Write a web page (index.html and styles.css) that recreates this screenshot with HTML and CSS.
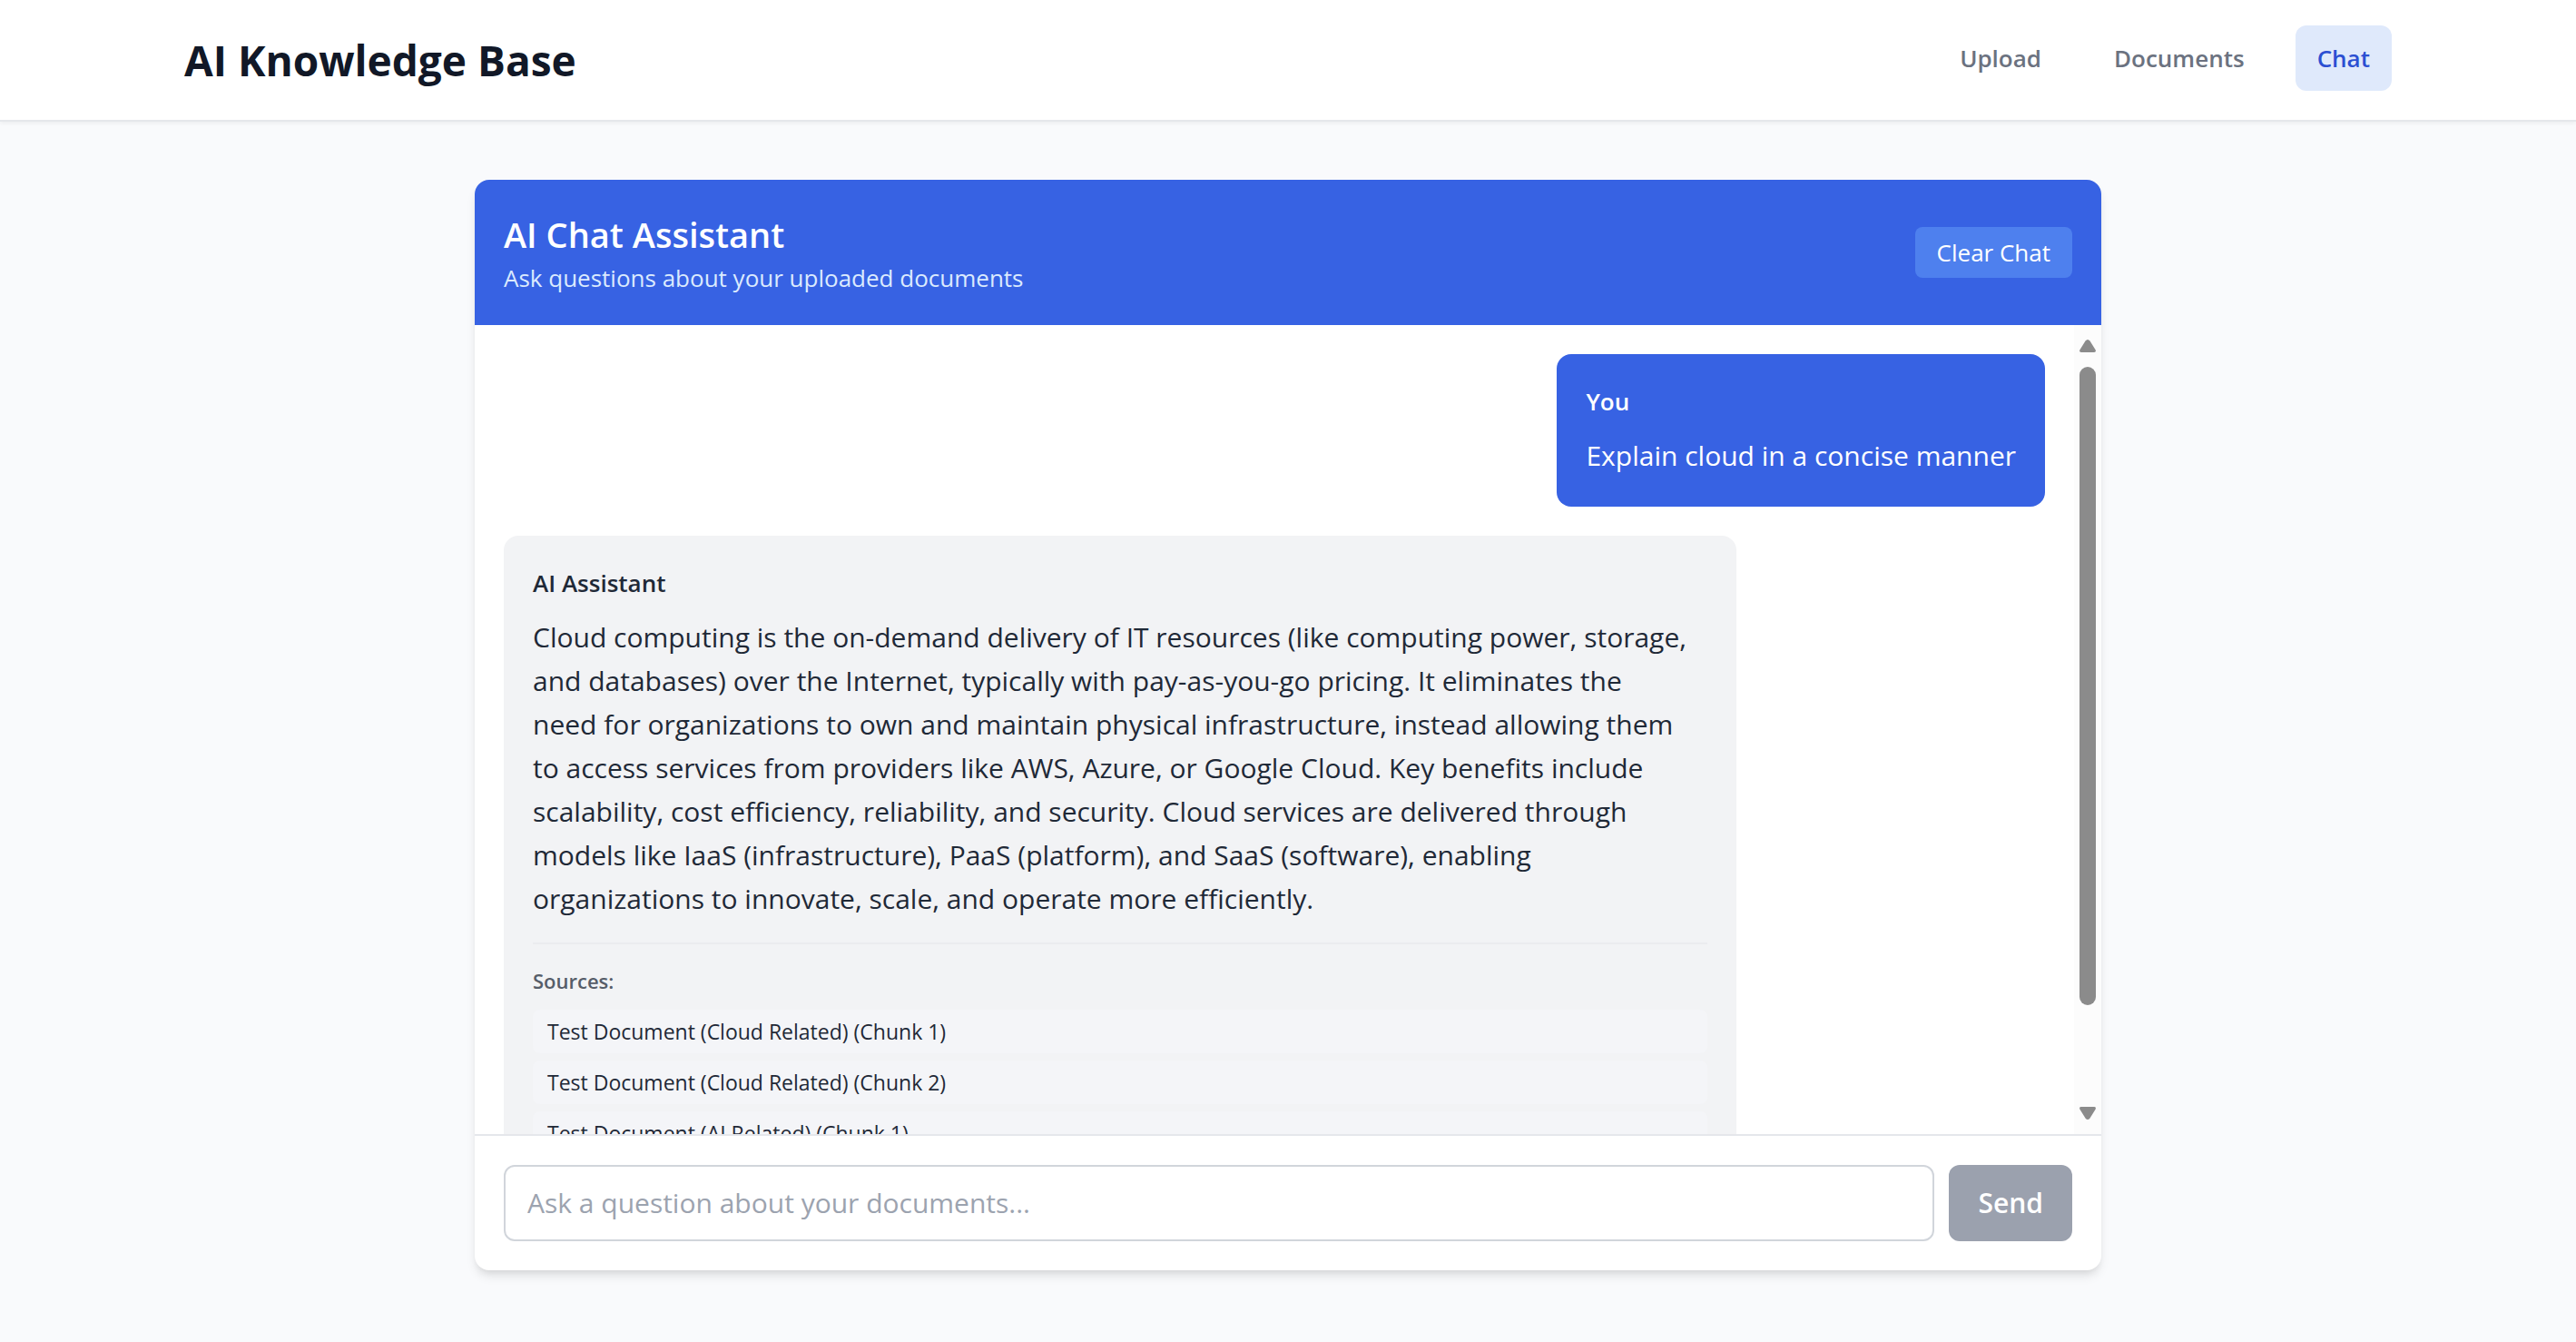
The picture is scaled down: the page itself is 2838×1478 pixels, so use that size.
FILE: index.html
```html
<!DOCTYPE html>
<html lang="en">
<head>
  <meta charset="utf-8">
  <meta name="viewport" content="width=device-width, initial-scale=1">
  <title>AI Knowledge Base</title>
  <link rel="stylesheet" href="styles.css">
</head>
<body>
  <header class="site-header">
    <div class="site-header-inner">
      <h1 class="site-title">AI Knowledge Base</h1>
      <nav class="site-nav">
        <a class="nav-link" href="#upload">Upload</a>
        <a class="nav-link" href="#documents">Documents</a>
        <a class="nav-link nav-link-active" href="#chat" aria-current="page">Chat</a>
      </nav>
    </div>
  </header>

  <main class="page">
    <section class="chat-card">
      <div class="chat-header">
        <div>
          <h2 class="chat-title">AI Chat Assistant</h2>
          <p class="chat-subtitle">Ask questions about your uploaded documents</p>
        </div>
        <button class="clear-button" type="button">Clear Chat</button>
      </div>

      <div class="chat-body">
        <div class="messages">
          <article class="message message-user">
            <h3 class="message-author">You</h3>
            <p class="message-text">Explain cloud in a concise manner</p>
          </article>
          <article class="message message-assistant">
            <h3 class="message-author">AI Assistant</h3>
            <p class="message-text">Cloud computing is the on-demand delivery of IT resources (like computing power, storage,<br>
              and databases) over the Internet, typically with pay-as-you-go pricing. It eliminates the<br>
              need for organizations to own and maintain physical infrastructure, instead allowing them<br>
              to access services from providers like AWS, Azure, or Google Cloud. Key benefits include<br>
              scalability, cost efficiency, reliability, and security. Cloud services are delivered through<br>
              models like IaaS (infrastructure), PaaS (platform), and SaaS (software), enabling<br>
              organizations to innovate, scale, and operate more efficiently.</p>
            <div class="sources">
              <h4 class="sources-title">Sources:</h4>
              <ul class="sources-list">
                <li class="source">Test Document (Cloud Related) (Chunk 1)</li>
                <li class="source">Test Document (Cloud Related) (Chunk 2)</li>
                <li class="source">Test Document (AI Related) (Chunk 1)</li>
              </ul>
            </div>
          </article>
        </div>
        <div class="scrollbar" aria-hidden="true">
          <svg class="scrollbar-arrow" viewBox="0 0 18 14"><path d="M6.500 1.500Q9-1.500 11.500 1.500L17.600 11.200Q18.600 14 16.200 14H1.800Q-.6 14 .4 11.200Z"/></svg>
          <div class="scrollbar-track"><div class="scrollbar-thumb"></div></div>
          <svg class="scrollbar-arrow" viewBox="0 0 18 14"><path d="M6.500 12.500Q9 15.500 11.500 12.500L17.600 2.800Q18.600 0 16.200 0H1.800Q-.6 0 .4 2.800Z"/></svg>
        </div>
      </div>

      <form class="composer">
        <input class="composer-input" type="text" aria-label="Question" placeholder="Ask a question about your documents...">
        <button class="send-button" type="submit" disabled>Send</button>
      </form>
    </section>
  </main>
</body>
</html>
```
FILE: styles.css
```css
:root {
  --blue: #3762e3;
  --blue-light: #4e80ee;
  --ink: #1f2937;
  --line: #e5e7eb;
}

* {
  box-sizing: border-box;
  margin: 0;
  padding: 0;
}

body {
  min-height: 100vh;
  background: #f9fafc;
  color: var(--ink);
  font-family: "Segoe UI", "Open Sans", "Noto Sans", sans-serif;
  font-size: 30px;
  line-height: 48px;
}

button,
input {
  font: inherit;
}

.site-header {
  background: #fff;
  border-bottom: 2px solid var(--line);
  box-shadow: 0 2px 4px rgba(0, 0, 0, 0.05);
}

.site-header-inner {
  display: flex;
  justify-content: space-between;
  max-width: 2560px;
  margin: 0 auto;
  padding: 28px 64px 32px;
}

.site-title {
  padding-top: 6px;
  color: #111827;
  font-size: 46px;
  font-weight: 700;
  line-height: 64px;
}

.site-nav {
  display: flex;
  gap: 32px;
}

.nav-link {
  padding: 16px 24px;
  border-radius: 12px;
  color: #6b7280;
  font-size: 26px;
  font-weight: 600;
  line-height: 40px;
  text-decoration: none;
}

.nav-link-active {
  background: #dfe9fb;
  color: #2b4fd2;
}

.page {
  max-width: 1920px;
  margin: 0 auto;
  padding: 64px;
}

.chat-card {
  display: flex;
  flex-direction: column;
  height: calc(100vh - 277px);
  border-radius: 16px;
  background: #fff;
  box-shadow: 0 8px 12px -2px rgba(0, 0, 0, 0.1), 0 4px 8px -4px rgba(0, 0, 0, 0.1);
  overflow: hidden;
}

.chat-header {
  display: flex;
  align-items: center;
  justify-content: space-between;
  padding: 32px;
  background: var(--blue);
  color: #fff;
}

.chat-title {
  font-size: 38px;
  font-weight: 600;
  line-height: 56px;
}

.chat-subtitle {
  color: #dbeafe;
  font-size: 26px;
  line-height: 40px;
}

.clear-button {
  padding: 8px 24px;
  border: 0;
  border-radius: 8px;
  background: var(--blue-light);
  color: #fff;
  font-size: 26px;
  line-height: 40px;
}

.chat-body {
  display: flex;
  flex: 1;
  min-height: 0;
}

.messages {
  display: flex;
  flex: 1;
  flex-direction: column;
  gap: 32px;
  padding: 32px;
  overflow-y: auto;
  scrollbar-width: none;
}

.message {
  flex-shrink: 0;
  max-width: 80%;
  padding: 32px;
  border-radius: 16px;
}

.message-user {
  align-self: flex-end;
  background: var(--blue);
  color: #fff;
}

.message-assistant {
  align-self: flex-start;
  width: 80%;
  background: #f2f3f5;
}

.message-author {
  margin-bottom: 16px;
  font-size: 26px;
  font-weight: 600;
  line-height: 40px;
}

.sources {
  margin-top: 24px;
  padding-top: 24px;
  border-top: 2px solid #ebecef;
}

.sources-title {
  margin-bottom: 16px;
  color: #565d69;
  font-size: 22px;
  font-weight: 600;
  line-height: 32px;
}

.sources-list {
  display: grid;
  gap: 8px;
  list-style: none;
}

.source {
  padding: 8px 16px;
  border-radius: 8px;
  background: #f4f5f8;
  font-size: 23px;
  line-height: 32px;
}

.scrollbar {
  display: flex;
  flex-direction: column;
  align-items: center;
  gap: 16px;
  width: 30px;
  padding: 16px 0;
  background: #fcfcfc;
}

.scrollbar-arrow {
  width: 18px;
  height: 14px;
  fill: #8b8b8b;
}

.scrollbar-track {
  flex: 1;
  width: 18px;
}

.scrollbar-thumb {
  height: 88%;
  border-radius: 9px;
  background: #8b8b8b;
}

.composer {
  display: flex;
  gap: 16px;
  padding: 32px;
  border-top: 2px solid var(--line);
}

.composer-input {
  flex: 1;
  min-width: 0;
  padding: 16px 24px;
  border: 2px solid #d1d5db;
  border-radius: 12px;
  background: #fff;
  color: var(--ink);
}

.composer-input::placeholder {
  color: #9ca3af;
  opacity: 1;
}

.send-button {
  padding: 16px 32px;
  border: 0;
  border-radius: 12px;
  background: #9ba1ae;
  color: #fff;
  font-weight: 600;
}
```
